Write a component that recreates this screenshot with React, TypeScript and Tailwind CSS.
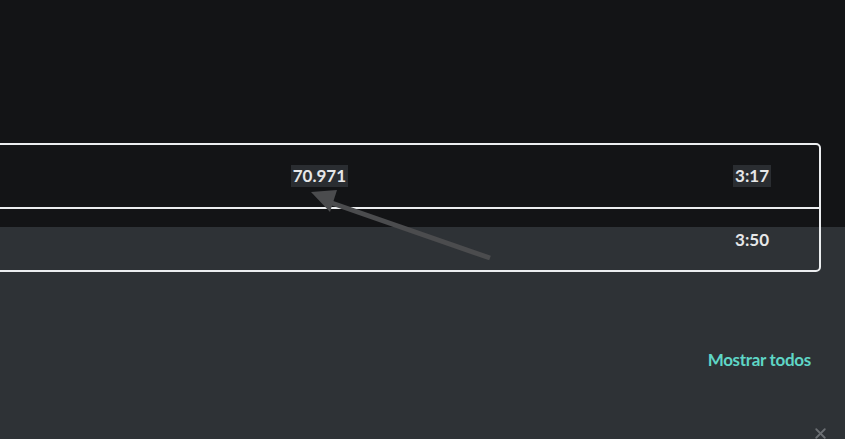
import { X } from 'lucide-react';

export default function App() {
  return (
    <div
      className="relative w-[845px] h-[439px] overflow-hidden bg-[linear-gradient(to_bottom,#131416_0px,#131416_227px,#2e3236_227px,#2e3236_100%)] font-['Lato','Liberation_Sans',sans-serif]"
    >
      <div className="pt-[143px] ml-[-12px] mr-[24px]">
        <div className="border-2 border-[#eceef0] rounded-r-[5px]">
          <div className="h-[62px] flex items-center">
            <div className="flex-1" />
            <span className="px-[2px] py-[2px] bg-[#2a2d31] text-[#e6e7e8] text-[17px] font-bold leading-[18px]">
              70.971
            </span>
            <div className="w-[385px]" />
            <span className="px-[2px] py-[2px] bg-[#2a2d31] text-[#e6e7e8] text-[17px] font-bold leading-[18px]">
              3:17
            </span>
            <div className="w-[48px]" />
          </div>
          <div className="h-[63px] flex items-center border-t-2 border-[#eceef0]">
            <div className="flex-1" />
            <span className="px-[2px] py-[2px] text-[#e6e7e8] text-[17px] font-bold leading-[18px]">
              3:50
            </span>
            <div className="w-[48px]" />
          </div>
        </div>
      </div>

      <div className="flex justify-end pr-[34px] pt-[75px]">
        <button className="text-[#5fd6c6] text-[17px] font-bold tracking-[-0.3px]">Mostrar todos</button>
      </div>

      <div className="absolute left-[812px] top-[425px] text-[#6c6f73]">
        <X size={17} strokeWidth={2.5} />
      </div>

      <svg className="absolute left-0 top-0 pointer-events-none" width="845" height="439">
        <line x1="490" y1="258" x2="326" y2="201" stroke="#4b4c4e" strokeWidth="5" />
        <polygon points="311,192 337,190 330,212" fill="#4b4c4e" />
      </svg>
    </div>
  );
}
